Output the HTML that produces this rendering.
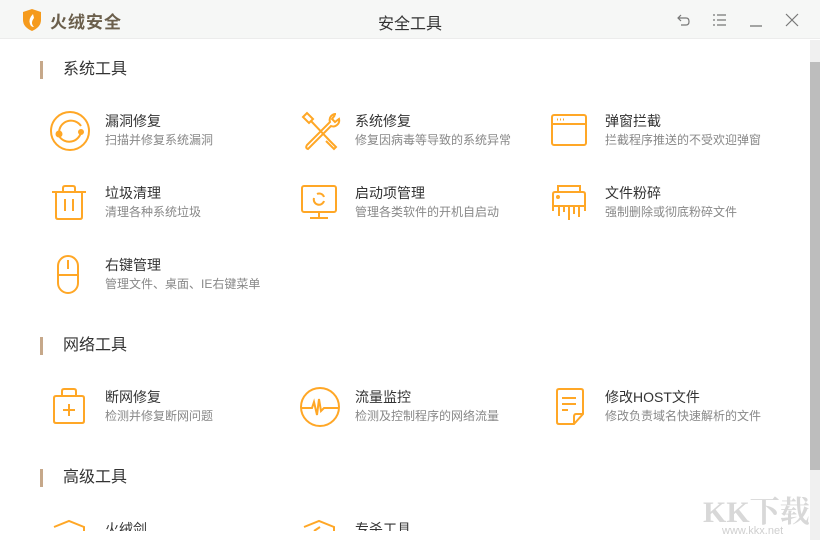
<!DOCTYPE html>
<html style="overflow:hidden;width:820px;height:540px"><head><meta charset="utf-8"><style>
*{margin:0;padding:0;box-sizing:border-box}
body{width:820px;height:540px;overflow:hidden;background:#fff;font-family:"Liberation Sans","Noto Sans CJK SC",sans-serif;position:relative}
.hdr{position:absolute;left:0;top:0;width:820px;height:39px;background:#f6f7f6;border-bottom:1px solid #ececec}
.logo{position:absolute;left:50px;top:8px;font-size:17px;font-weight:bold;color:#6b5f4c;letter-spacing:1px}
.ttl{position:absolute;left:0;width:820px;top:10px;text-align:center;font-size:16px;color:#333}
.sec{position:absolute;left:40px;height:18px;border-left:3px solid #c6a88a;padding-left:20px;font-size:16px;color:#333;line-height:18px}
.it{position:absolute;white-space:nowrap}
.it svg{position:absolute;left:-55px;top:-1px}
.t{font-size:14px;color:#333;line-height:18px}
.s{font-size:12px;color:#888;line-height:18px;margin-top:1px}
.sb{position:absolute;left:810px;top:40px;width:10px;height:500px;background:#f0f0f0}
.th{position:absolute;left:810px;top:62px;width:10px;height:408px;background:#bdbdbd}
</style></head><body>
<div class="hdr">
<svg style="position:absolute;left:22px;top:9px" width="20" height="22" viewBox="0 0 20 22"><path d="M1 3 L10 0 L19 3 L19 11 Q19 18 10 22 Q1 18 1 11Z" fill="#f59a1c"/><path d="M11 5 Q6 10 8 15 Q9 18 12 18 Q8 14 12 9Z" fill="#fff"/></svg>
<div class="logo">火绒安全</div>
<div class="ttl">安全工具</div>
<svg style="position:absolute;left:676px;top:12px" width="16" height="16" viewBox="0 0 16 16" fill="none" stroke="#777" stroke-width="1.2"><path d="M5 3 L2 6 L5 9 M2 6 H10 Q13 6 13 9.5 Q13 13 10 13 H5"/></svg>
<svg style="position:absolute;left:712px;top:13px" width="16" height="14" viewBox="0 0 16 14" stroke="#777" stroke-width="1.2"><path d="M1 2H3M1 7H3M1 12H3M5 2H14M5 7H14M5 12H14"/></svg>
<svg style="position:absolute;left:749px;top:12px" width="14" height="16" viewBox="0 0 14 16" stroke="#777" stroke-width="1.3"><path d="M1 14H13"/></svg>
<svg style="position:absolute;left:785px;top:13px" width="14" height="14" viewBox="0 0 14 14" stroke="#777" stroke-width="1.2"><path d="M1 1L13 13M13 1L1 13"/></svg>
</div>

<div class="sec" style="top:61px">系统工具</div>
<div class="sec" style="top:337px">网络工具</div>
<div class="sec" style="top:469px">高级工具</div>

<div class="it" style="left:105px;top:112px"><svg width="44" height="44" viewBox="0 0 44 44" fill="none" stroke="#ffa726" stroke-width="2"><circle cx="20" cy="20" r="19"/><path d="M9 22 A12 12 0 0 1 31 15 M31 21 A12 12 0 0 1 9 25"/><circle cx="9" cy="23" r="2.5" fill="#ffa726"/><circle cx="31" cy="21" r="2" fill="#ffa726"/></svg><div class="t">漏洞修复</div><div class="s">扫描并修复系统漏洞</div></div>
<div class="it" style="left:355px;top:112px"><svg width="44" height="44" viewBox="0 0 44 44" fill="none" stroke="#ffa726" stroke-width="2"><path d="M3 6L7 2L13 8L9 12Z M11 10L30 30 M28 28L36 36L34 38L26 30 M36 3A6 6 0 0 0 30 11L7 34Q5 37 8 38L31 15A6 6 0 0 0 39 8L35 11L32 8L35 4"/></svg><div class="t">系统修复</div><div class="s">修复因病毒等导致的系统异常</div></div>
<div class="it" style="left:605px;top:112px"><svg width="44" height="44" viewBox="0 0 44 44" fill="none" stroke="#ffa726" stroke-width="2"><rect x="2" y="4" width="34" height="30" rx="2"/><path d="M2 13H36"/><path d="M7 8.5H8M10 8.5H11M13 8.5H14" stroke-width="2"/></svg><div class="t">弹窗拦截</div><div class="s">拦截程序推送的不受欢迎弹窗</div></div>

<div class="it" style="left:105px;top:184px"><svg width="44" height="44" viewBox="0 0 44 44" fill="none" stroke="#ffa726" stroke-width="2"><path d="M2 9H36M13 9V5Q13 3 15 3H23Q25 3 25 5V9M6 9V34Q6 36 8 36H30Q32 36 32 34V9M15 16V28M23 16V28"/></svg><div class="t">垃圾清理</div><div class="s">清理各种系统垃圾</div></div>
<div class="it" style="left:355px;top:184px"><svg width="44" height="44" viewBox="0 0 44 44" fill="none" stroke="#ffa726" stroke-width="2"><rect x="2" y="3" width="34" height="26" rx="2"/><path d="M19 29V34M10 35H28"/><path d="M14 15A5 5 0 0 0 24 18M17 11A5 5 0 0 1 24 14"/></svg><div class="t">启动项管理</div><div class="s">管理各类软件的开机自启动</div></div>
<div class="it" style="left:605px;top:184px"><svg width="44" height="44" viewBox="0 0 44 44" fill="none" stroke="#ffa726" stroke-width="2"><path d="M8 9V3H30V9M3 28V11Q3 9 5 9H33Q35 9 35 11V28M3 23H35M9 23V33M14 23V29M19 23V37M24 23V31M29 23V34"/><circle cx="8" cy="14" r="1" fill="#ffa726"/></svg><div class="t">文件粉碎</div><div class="s">强制删除或彻底粉碎文件</div></div>

<div class="it" style="left:105px;top:256px"><svg width="44" height="44" viewBox="0 0 44 44" fill="none" stroke="#ffa726" stroke-width="2"><path d="M8 11A10 10 0 0 1 28 11V28A10 10 0 0 1 8 28Z M8 20H28M18 5V14"/></svg><div class="t">右键管理</div><div class="s">管理文件、桌面、IE右键菜单</div></div>

<div class="it" style="left:105px;top:388px"><svg width="44" height="44" viewBox="0 0 44 44" fill="none" stroke="#ffa726" stroke-width="2"><path d="M12 9V4Q12 2 14 2H24Q26 2 26 4V9M4 11Q4 9 6 9H32Q34 9 34 11V34Q34 36 32 36H6Q4 36 4 34Z M19 17V29M13 23H25"/></svg><div class="t">断网修复</div><div class="s">检测并修复断网问题</div></div>
<div class="it" style="left:355px;top:388px"><svg width="44" height="44" viewBox="0 0 44 44" fill="none" stroke="#ffa726" stroke-width="2"><circle cx="20" cy="20" r="19"/><path d="M1 21H12L14 15L17 28L19 12L21 24L24 21H39"/></svg><div class="t">流量监控</div><div class="s">检测及控制程序的网络流量</div></div>
<div class="it" style="left:605px;top:388px"><svg width="44" height="44" viewBox="0 0 44 44" fill="none" stroke="#ffa726" stroke-width="2"><path d="M7 4Q7 2 9 2H31Q33 2 33 4V27L24 37H9Q7 37 7 35Z M33 27H26Q24 27 24 30V37M12 11H26M12 17H26M12 23H18"/></svg><div class="t">修改HOST文件</div><div class="s">修改负责域名快速解析的文件</div></div>

<div class="it" style="left:105px;top:520px"><svg width="44" height="44" viewBox="0 0 44 44" fill="none" stroke="#ffa726" stroke-width="2"><path d="M4 8L19 2L34 8V20"/></svg><div class="t">火绒剑</div></div>
<div class="it" style="left:355px;top:520px"><svg width="44" height="44" viewBox="0 0 44 44" fill="none" stroke="#ffa726" stroke-width="2"><path d="M4 8L19 2L34 8V20M14 12L20 8"/></svg><div class="t">专杀工具</div></div>
<div style="position:absolute;left:0;top:531px;width:810px;height:9px;background:#fff"></div>

<div class="sb"></div><div class="th"></div>
<div style="position:absolute;left:703px;top:487px;font-size:30px;font-weight:bold;color:#d8d8d8;white-space:nowrap;font-family:'Liberation Serif','Noto Serif CJK SC',serif">KK下载</div>
<div style="position:absolute;left:722px;top:525px;font-size:11px;color:#cfcfcf;white-space:nowrap">www.kkx.net</div>
</body></html>
